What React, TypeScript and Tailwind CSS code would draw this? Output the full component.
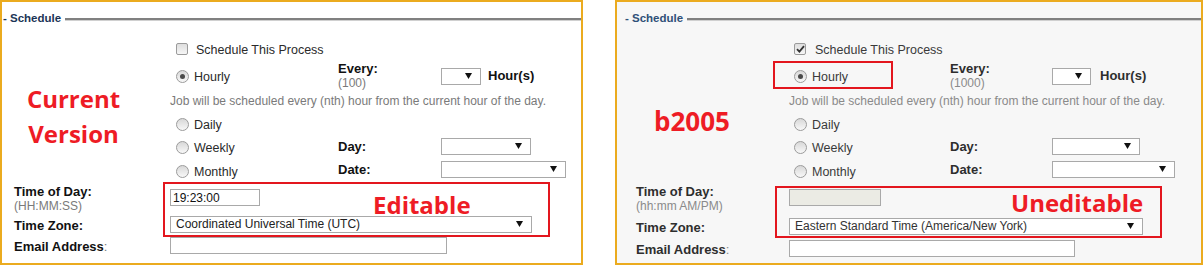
import React from "react";

type V = {
  right: boolean;
};

function Arrow() {
  return (
    <svg width="7" height="6" viewBox="0 0 7 6" className="shrink-0">
      <polygon points="0,0 7,0 3.5,6" fill="#111" />
    </svg>
  );
}

function Select({ w, text, tc }: { w: string; text?: string; tc?: string }) {
  return (
    <div
      className={
        "flex h-[17px] items-center justify-between border border-[#a9a9a9] bg-white pl-[5px] pr-[8px] text-[12px] " +
        w +
        " " +
        (tc ?? "text-[#222]")
      }
    >
      <span className="whitespace-nowrap">{text ?? ""}</span>
      <Arrow />
    </div>
  );
}

function Radio({ checked }: { checked?: boolean }) {
  return (
    <span className="flex h-[13px] w-[13px] shrink-0 items-center justify-center rounded-full border border-[#9b9b9b] bg-linear-to-b from-[#d8d8d8] to-[#f8f8f8]">
      {checked ? <span className="h-[5px] w-[5px] rounded-full bg-[#4a4a4a]" /> : null}
    </span>
  );
}

function Checkbox({ checked }: { checked?: boolean }) {
  return (
    <span className="flex h-[12px] w-[12px] shrink-0 items-center justify-center rounded-[2px] border border-[#9b9b9b] bg-linear-to-b from-[#dedede] to-[#f6f6f6]">
      {checked ? (
        <svg width="9" height="8" viewBox="0 0 9 8">
          <path d="M1 4.2 L3.4 6.6 L8 1.2" stroke="#333" strokeWidth="1.8" fill="none" />
        </svg>
      ) : null}
    </span>
  );
}

function Panel({ right }: V) {
  const c1 = right ? "w-[153px] shrink-0" : "w-[156px] shrink-0";
  const c2 = right ? "w-[161px] shrink-0" : "w-[168px] shrink-0";
  const c3 = right ? "w-[102px] shrink-0" : "w-[103px] shrink-0";
  const radioPad = right ? "pl-[5px]" : "pl-[6px]";
  const txt = right ? "text-[#3a3a3a]" : "text-[#2a2a2a]";
  const lbl = right ? "text-[#2e2e2e]" : "text-[#111]";
  const gray = right ? "text-[#8a8a8a]" : "text-[#7a7a7a]";

  const RadioItem = ({ label, checked }: { label: string; checked?: boolean }) => (
    <div className={"flex items-center " + radioPad}>
      <Radio checked={checked} />
      <span className={"ml-[5px] pt-[2px] text-[12.5px] " + txt}>{label}</span>
    </div>
  );

  return (
    <div
      className={
        "relative h-[265px] shrink-0 border-2 border-[#ebab1f] " +
        (right ? "w-[588px] bg-[#f7f7f7]" : "w-[583px] bg-white")
      }
    >
      {/* legend */}
      <div className={"mt-[10px] flex h-[14px] items-center " + (right ? "pl-[8px]" : "pl-[1px]")}>
        <span className={"text-[11.5px] font-bold " + (right ? "text-[#2f5078]" : "text-[#1b3556]")}>
          - Schedule
        </span>
        <div className="ml-[4px] h-[3px] flex-1 border-t-2 border-b border-t-[#808080] border-b-[#d0d0d0]" />
      </div>

      <div className={"flex flex-col " + (right ? "pl-[19px]" : "pl-[12px]")}>
        {/* schedule this process */}
        <div className="mt-[15px] flex h-[16px] items-center">
          <div className={c1} />
          <div className={"flex items-center " + radioPad}>
            <Checkbox checked={right} />
            <span className={"pt-[2px] text-[12.5px] " + txt + (right ? " ml-[9px]" : " ml-[8px]")}>
              Schedule This Process
            </span>
          </div>
        </div>

        {/* hourly */}
        <div className="mt-[4px] flex h-[30px] items-center">
          <div className={c1} />
          <div className={c2 + " pt-[1px]"}>
            <RadioItem label="Hourly" checked />
          </div>
          <div className={c3 + " flex flex-col leading-[14px]"}>
            <span className={"text-[13px] font-bold " + lbl}>Every:</span>
            <span className={"text-[12px] " + gray}>{right ? "(1000)" : "(100)"}</span>
          </div>
          <Select w={right ? "w-[39px]" : "w-[40px]"} />
          <span className={"text-[13px] font-bold " + lbl + (right ? " ml-[9px]" : " ml-[7px]")}>Hour(s)</span>
        </div>

        {/* job text */}
        <div className="mt-[3px] flex h-[14px] items-center">
          <div className={c1} />
          <span className={"whitespace-nowrap text-[12px] " + gray}>
            Job will be scheduled every (nth) hour from the current hour of the day.
          </span>
        </div>

        {/* daily */}
        <div className="mt-[8px] flex h-[16px] items-center">
          <div className={c1} />
          <RadioItem label="Daily" />
        </div>

        {/* weekly */}
        <div className="mt-[5px] flex h-[18px] items-center">
          <div className={c1} />
          <div className={c2 + " pt-[3px]"}>
            <RadioItem label="Weekly" />
          </div>
          <div className={c3}>
            <span className={"text-[13px] font-bold " + lbl}>Day:</span>
          </div>
          <Select w={right ? "w-[88px]" : "w-[90px]"} />
        </div>

        {/* monthly */}
        <div className="mt-[5px] flex h-[18px] items-center">
          <div className={c1} />
          <div className={c2 + " pt-[5px]"}>
            <RadioItem label="Monthly" />
          </div>
          <div className={c3}>
            <span className={"text-[13px] font-bold " + lbl}>Date:</span>
          </div>
          <Select w={right ? "w-[123px]" : "w-[125px]"} />
        </div>

        {/* time of day */}
        <div className="mt-[4px] flex h-[28px] items-start">
          <div className={c1 + " flex flex-col pt-[3px] leading-[14px]"}>
            <span className={"text-[13px] font-bold " + lbl}>Time of Day:</span>
            <span className={"text-[12px] " + gray}>{right ? "(hh:mm AM/PM)" : "(HH:MM:SS)"}</span>
          </div>
          <div
            className={
              "mt-[7px] flex h-[17px] items-center border border-[#a9a9a9] pl-[2px] text-[12px] text-[#111] " +
              (right ? "w-[92px] bg-[#ebebe4]" : "w-[90px] bg-white")
            }
          >
            {right ? "" : "19:23:00"}
          </div>
        </div>

        {/* time zone */}
        <div className={"flex h-[18px] items-center " + (right ? "mt-[7px]" : "mt-[5px]")}>
          <div className={c1 + " pt-[1px]"}>
            <span className={"text-[13px] font-bold " + lbl}>Time Zone:</span>
          </div>
          <Select
            w={right ? "w-[354px]" : "w-[362px]"}
            text={right ? "Eastern Standard Time (America/New York)" : "Coordinated Universal Time (UTC)"}
            tc={right ? "text-[#333]" : "text-[#222]"}
          />
        </div>

        {/* email */}
        <div className={"flex h-[17px] items-center " + (right ? "mt-[5px]" : "mt-[4px]")}>
          <div className={c1 + " pt-[1px]"}>
            <span className={"text-[13px] font-bold " + lbl}>Email Address</span>
            <span className={"text-[13px] " + gray}>:</span>
          </div>
          <div
            className={
              "h-[17px] border border-[#a9a9a9] bg-white " + (right ? "w-[286px]" : "w-[277px]")
            }
          />
        </div>
      </div>

      {/* annotations */}
      {right ? (
        <>
          <div className="absolute left-[156px] top-[59px] h-[28px] w-[120px] border-2 border-[#e3161e]" />
          <div className="absolute left-[158px] top-[184px] h-[52px] w-[387px] border-2 border-[#e3161e]" />
          <div className="absolute left-[394px] top-[189px] font-['Open_Sans',sans-serif] text-[24px] font-bold leading-[24px] text-[#ee1c25]">
            Uneditable
          </div>
          <div className="absolute left-[37px] top-[106px] font-['Open_Sans',sans-serif] text-[26px] font-bold leading-[26px] text-[#ee1c25]">
            b2005
          </div>
        </>
      ) : (
        <>
          <div className="absolute left-[161px] top-[180px] h-[55px] w-[387px] border-2 border-[#e3161e]" />
          <div className="absolute left-[371px] top-[191px] font-['Open_Sans',sans-serif] text-[24px] font-bold leading-[24px] text-[#ee1c25]">
            Editable
          </div>
          <div className="absolute left-[18px] top-[79px] w-[107px] text-center font-['Open_Sans',sans-serif] text-[24px] font-bold leading-[35px] text-[#ee1c25]">
            Current
            <br />
            Version
          </div>
        </>
      )}
    </div>
  );
}

export default function App() {
  return (
    <div className="flex h-[266px] w-[1204px] gap-[32px] overflow-hidden bg-white font-['Liberation_Sans',Arial,sans-serif]">
      <Panel right={false} />
      <Panel right={true} />
    </div>
  );
}
